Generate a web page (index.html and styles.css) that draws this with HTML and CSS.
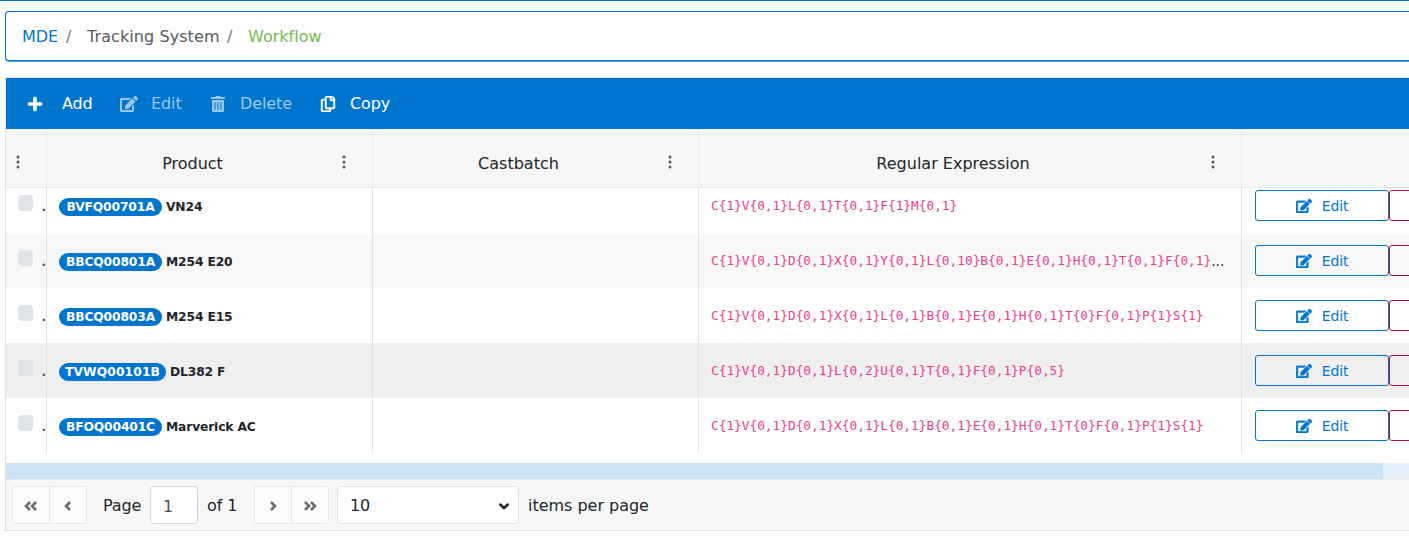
FILE: index.html
```html
<!DOCTYPE html>
<html lang="en">
<head>
<meta charset="utf-8">
<title>Workflow</title>
<link rel="stylesheet" href="styles.css">
</head>
<body>
<svg class="defs" width="0" height="0" aria-hidden="true">
  <symbol id="edit" viewBox="0 0 576 512"><path d="M402.6 83.2l90.2 90.2c3.8 3.8 3.8 10 0 13.8L274.4 405.6l-92.8 10.3c-12.4 1.4-22.9-9.1-21.5-21.5l10.3-92.8L388.8 83.2c3.8-3.8 10-3.8 13.8 0zm162-22.9l-48.8-48.8c-15.2-15.2-39.9-15.2-55.2 0l-35.4 35.4c-3.8 3.8-3.8 10 0 13.8l90.2 90.2c3.8 3.8 10 3.8 13.8 0l35.4-35.4c15.2-15.3 15.2-40 0-55.2zM384 346.2V448H64V128h229.8c3.2 0 6.2-1.3 8.5-3.5l40-40c7.6-7.6 2.2-20.5-8.5-20.5H48C21.5 64 0 85.5 0 112v352c0 26.5 21.5 48 48 48h352c26.5 0 48-21.5 48-48V306.2c0-10.7-12.9-16-20.5-8.5l-40 40c-2.2 2.3-3.5 5.3-3.5 8.5z"/></symbol>
  <symbol id="plus" viewBox="0 0 448 512"><path d="M416 208H272V64c0-17.67-14.33-32-32-32h-32c-17.67 0-32 14.33-32 32v144H32c-17.67 0-32 14.33-32 32v32c0 17.67 14.33 32 32 32h144v144c0 17.67 14.33 32 32 32h32c17.67 0 32-14.33 32-32V304h144c17.67 0 32-14.33 32-32v-32c0-17.67-14.33-32-32-32z"/></symbol>
  <symbol id="trash" viewBox="0 0 448 512"><path d="M32 464a48 48 0 0 0 48 48h288a48 48 0 0 0 48-48V128H32zm272-256a16 16 0 0 1 32 0v224a16 16 0 0 1-32 0zm-96 0a16 16 0 0 1 32 0v224a16 16 0 0 1-32 0zm-96 0a16 16 0 0 1 32 0v224a16 16 0 0 1-32 0zM432 32H312l-9.4-18.7A24 24 0 0 0 281.1 0H166.8a23.72 23.72 0 0 0-21.4 13.3L136 32H16A16 16 0 0 0 0 48v32a16 16 0 0 0 16 16h416a16 16 0 0 0 16-16V48a16 16 0 0 0-16-16z"/></symbol>
  <symbol id="copy" viewBox="0 0 448 512"><path d="M433.941 65.941l-51.882-51.882A48 48 0 0 0 348.118 0H176c-26.51 0-48 21.49-48 48v48H48c-26.51 0-48 21.49-48 48v320c0 26.51 21.49 48 48 48h224c26.51 0 48-21.49 48-48v-48h80c26.51 0 48-21.49 48-48V99.882a48 48 0 0 0-14.059-33.941zM266 464H54a6 6 0 0 1-6-6V150a6 6 0 0 1 6-6h74v224c0 26.51 21.49 48 48 48h96v42a6 6 0 0 1-6 6zm128-96H182a6 6 0 0 1-6-6V54a6 6 0 0 1 6-6h106v88c0 13.255 10.745 24 24 24h88v202a6 6 0 0 1-6 6zm6-256h-64V48h9.632c1.591 0 3.117.632 4.243 1.757l48.368 48.368a6 6 0 0 1 1.757 4.243V112z"/></symbol>
  <symbol id="dots" viewBox="0 0 4 14"><circle cx="2" cy="2" r="1.5"/><circle cx="2" cy="7" r="1.5"/><circle cx="2" cy="12" r="1.5"/></symbol>
</svg>

<nav class="breadcrumb">
  <span class="crumb crumb-home">MDE</span><span class="sep">/</span>
  <span class="crumb crumb-mid">Tracking System</span><span class="sep">/</span>
  <span class="crumb crumb-current">Workflow</span>
</nav>

<main class="grid">
  <div class="toolbar">
    <span class="tool tool-add"><svg class="icon"><use href="#plus"/></svg><span>Add</span></span>
    <span class="tool tool-edit disabled"><svg class="icon"><use href="#edit"/></svg><span>Edit</span></span>
    <span class="tool tool-delete disabled"><svg class="icon"><use href="#trash"/></svg><span>Delete</span></span>
    <span class="tool tool-copy"><svg class="icon"><use href="#copy"/></svg><span>Copy</span></span>
  </div>

  <div class="row head">
    <div class="cell"><svg class="dots"><use href="#dots"/></svg></div>
    <div class="cell"><span class="title">Product</span><svg class="dots"><use href="#dots"/></svg></div>
    <div class="cell"><span class="title">Castbatch</span><svg class="dots"><use href="#dots"/></svg></div>
    <div class="cell"><span class="title">Regular Expression</span><svg class="dots"><use href="#dots"/></svg></div>
    <div class="cell"></div>
  </div>

  <div class="body">
    <div class="rows">
      <div class="row">
        <div class="cell check"><span class="box"></span><span class="dot">.</span></div>
        <div class="cell product"><span class="badge">BVFQ00701A</span><b>VN24</b></div>
        <div class="cell"></div>
        <div class="cell regex"><code>C{1}V{0,1}L{0,1}T{0,1}F{1}M{0,1}</code></div>
        <div class="cell actions"><span class="btn"><svg class="icon"><use href="#edit"/></svg>Edit</span><span class="btn danger"></span></div>
      </div>
      <div class="row alt">
        <div class="cell check"><span class="box"></span><span class="dot">.</span></div>
        <div class="cell product"><span class="badge">BBCQ00801A</span><b>M254 E20</b></div>
        <div class="cell"></div>
        <div class="cell regex"><code>C{1}V{0,1}D{0,1}X{0,1}Y{0,1}L{0,10}B{0,1}E{0,1}H{0,1}T{0,1}F{0,1}</code><span class="more">...</span></div>
        <div class="cell actions"><span class="btn"><svg class="icon"><use href="#edit"/></svg>Edit</span><span class="btn danger"></span></div>
      </div>
      <div class="row">
        <div class="cell check"><span class="box"></span><span class="dot">.</span></div>
        <div class="cell product"><span class="badge">BBCQ00803A</span><b>M254 E15</b></div>
        <div class="cell"></div>
        <div class="cell regex"><code>C{1}V{0,1}D{0,1}X{0,1}L{0,1}B{0,1}E{0,1}H{0,1}T{0}F{0,1}P{1}S{1}</code></div>
        <div class="cell actions"><span class="btn"><svg class="icon"><use href="#edit"/></svg>Edit</span><span class="btn danger"></span></div>
      </div>
      <div class="row hover">
        <div class="cell check"><span class="box"></span><span class="dot">.</span></div>
        <div class="cell product"><span class="badge badge-wide">TVWQ00101B</span><b>DL382 F</b></div>
        <div class="cell"></div>
        <div class="cell regex"><code>C{1}V{0,1}D{0,1}L{0,2}U{0,1}T{0,1}F{0,1}P{0,5}</code></div>
        <div class="cell actions"><span class="btn"><svg class="icon"><use href="#edit"/></svg>Edit</span><span class="btn danger"></span></div>
      </div>
      <div class="row">
        <div class="cell check"><span class="box"></span><span class="dot">.</span></div>
        <div class="cell product"><span class="badge">BFOQ00401C</span><b>Marverick AC</b></div>
        <div class="cell"></div>
        <div class="cell regex"><code>C{1}V{0,1}D{0,1}X{0,1}L{0,1}B{0,1}E{0,1}H{0,1}T{0}F{0,1}P{1}S{1}</code></div>
        <div class="cell actions"><span class="btn"><svg class="icon"><use href="#edit"/></svg>Edit</span><span class="btn danger"></span></div>
      </div>
    </div>
  </div>

  <div class="scrollbar"><div class="thumb"></div></div>

  <div class="pager">
    <div class="pages">
      <span class="page-btn first"><svg class="chev" viewBox="0 0 14 10"><path d="M6 1L2 5l4 4M12 1L8 5l4 4"/></svg></span>
      <span class="page-btn"><svg class="chev" viewBox="0 0 14 10"><path d="M9 1L5 5l4 4"/></svg></span>
    </div>
    <span class="label-page">Page</span>
    <span class="page-input">1</span>
    <span class="label-of">of 1</span>
    <div class="pages pages-next">
      <span class="page-btn"><svg class="chev" viewBox="0 0 14 10"><path d="M5 1l4 4-4 4"/></svg></span>
      <span class="page-btn last"><svg class="chev" viewBox="0 0 14 10"><path d="M2 1l4 4-4 4M8 1l4 4-4 4"/></svg></span>
    </div>
    <span class="select"><span>10</span><svg class="caret" viewBox="0 0 12 8"><path d="M1.500 2L6 6l4.500-4"/></svg></span>
    <span class="label-items">items per page</span>
  </div>
</main>
</body>
</html>
```
FILE: styles.css
```css
* { box-sizing: border-box; }
body {
  margin: 0;
  height: 559px;
  overflow: hidden;
  border-top: 1px solid #0275c9;
  background: #fff;
  color: #212529;
  font: 16px/24px Verdana, "DejaVu Sans", sans-serif;
  letter-spacing: -0.1px;
}
.defs { display: block; }
svg { flex: none; fill: currentColor; }

.breadcrumb {
  display: flex;
  align-items: center;
  height: 50px;
  margin: 10px 0 0 5px;
  padding: 2px 0 0 16px;
  border: 1px solid #0275cc;
  border-right: 0;
  border-radius: 4px 0 0 4px;
  box-shadow: 0 1px 0 #5c9fd6;
}
.crumb { white-space: nowrap; }
.crumb-home { width: 36px; color: #0275cc; }
.crumb-mid { width: 132px; margin-left: 1px; color: #55595c; letter-spacing: 0.08px; }
.crumb-current { margin-left: 1px; color: #72bc50; letter-spacing: 0.02px; }
.sep { width: 20px; margin-left: 8px; color: #6c757d; }

.grid {
  margin: 16px 0 0 5px;
  border: 1px solid #dee2e6;
  border-right: 0;
}
.toolbar {
  display: flex;
  align-items: center;
  height: 51px;
  background: #0075cd;
  color: #fff;
}
.tool { display: flex; align-items: center; flex: none; }
.tool .icon { width: 18px; height: 16px; margin-right: 13px; }
.tool-add { margin-left: 20px; width: 94px; }
.tool-add .icon { margin-right: 18px; stroke: currentColor; stroke-width: 16px; }
.tool-edit { width: 89px; }
.tool-delete { width: 110px; }
.tool-copy .icon { stroke: currentColor; stroke-width: 14px; }
.disabled { color: #9ac8ec; }

.row {
  display: grid;
  grid-template-columns: 41px 326px 326px 543px 1fr;
  height: 55px;
}
.cell {
  display: flex;
  align-items: center;
  overflow: hidden;
  white-space: nowrap;
  border-right: 1px solid #dee0e6;
}
.cell:last-child { border-right: 0; }
.head { height: 59px; background: #f7f7f7; border-bottom: 1px solid #ebebeb; }
.head .cell { border-color: #ebebeb; padding-top: 9px; }
.title { flex: 1; padding-top: 2px; text-align: center; letter-spacing: 0; }
.dots { width: 4px; height: 14px; margin: 0 26px 2px 4px; color: #55595c; }
.head .cell:first-child .dots { margin-left: 10px; }

.body { height: 275px; overflow: hidden; }
.rows { margin-top: -10px; }
.alt { background: #f8f8f8; }
.hover { background: #efefef; }
.check { padding-left: 12px; color: #55595c; font-size: 13px; }
.box { width: 16px; height: 16px; margin-bottom: 5px; border-radius: 4px; background: #e0e4e8; }
.dot { margin: 2px 0 0 8px; font-weight: bold; }
.product { padding: 2px 0 0 12px; font-size: 12.3px; letter-spacing: -0.15px; }
.product b { margin-left: 4px; }
.badge {
  width: 103px;
  height: 18px;
  margin-top: 1px;
  border-radius: 9px;
  background: #0075cd;
  color: #fff;
  font-weight: bold;
  line-height: 18px;
  text-align: center;
}
.badge-wide { width: 107px; letter-spacing: 0.1px; }
.regex { padding: 1px 0 0 12px; }
code {
  color: #e83e8c;
  font: 12.79px/20px "DejaVu Sans Mono", monospace;
  letter-spacing: 0;
}
.more { font-size: 14px; }
.actions { padding-left: 13px; }
.btn {
  display: flex;
  flex: none;
  align-items: center;
  justify-content: center;
  gap: 10px;
  width: 134px;
  height: 31px;
  border: 1px solid #0275cc;
  border-radius: 3px;
  color: #0275cc;
  font-size: 14px;
}
.btn .icon { width: 16px; height: 14px; stroke: currentColor; stroke-width: 14px; }
.danger { border-color: #b0103f; }

.scrollbar { height: 16px; background: #e3f0f9; }
.thumb { width: 1377px; height: 16px; background: #cde3f4; }

.pager {
  display: flex;
  align-items: center;
  height: 51px;
  padding-left: 6px;
  border-top: 1px solid #ebebeb;
  background: #f7f7f7;
  white-space: nowrap;
}
.pages { display: flex; width: 75px; flex: none; }
.page-btn {
  display: flex;
  align-items: center;
  justify-content: center;
  width: 38px;
  height: 38px;
  padding-top: 2px;
  border: 1px solid #e4e7eb;
  background: #fcfcfc;
}
.page-btn + .page-btn { margin-left: -1px; }
.first { border-radius: 4px 0 0 4px; }
.last { border-radius: 0 4px 4px 0; }
.chev, .caret { width: 14px; height: 10px; fill: none; stroke: #6a6c6e; stroke-width: 2.6; }
.label-page { width: 47px; margin-left: 16px; padding-top: 2px; }
.page-input {
  width: 48px;
  height: 38px;
  padding: 8px 12px;
  border: 1px solid #ced4da;
  border-radius: 4px;
  background: #fff;
  color: #495057;
}
.label-of { width: 47px; margin-left: 9px; padding-top: 2px; }
.select {
  display: flex;
  align-items: center;
  justify-content: space-between;
  width: 182px;
  height: 38px;
  margin-left: 8px;
  padding: 2px 8px 0 12px;
  border: 1px solid #dde0e6;
  border-radius: 4px;
  background: #fff;
}
.caret { width: 12px; height: 8px; stroke: #212529; }
.label-items { margin-left: 9px; padding-top: 2px; letter-spacing: -0.02px; }
```
